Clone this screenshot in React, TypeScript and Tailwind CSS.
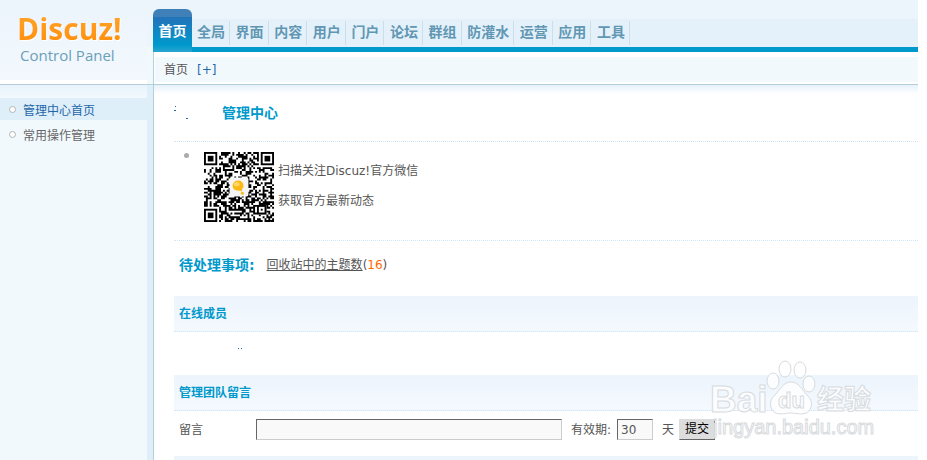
import React from 'react';

const NAV = ['全局', '界面', '内容', '用户', '门户', '论坛', '群组', '防灌水', '运营', '应用', '工具'];
const SIDE_MENU = ['管理中心首页', '常用操作管理'];

const QR_SIZE = 37;

const isFinder = (x: number, y: number) =>
  (x < 8 && y < 8) || (x > QR_SIZE - 9 && y < 8) || (x < 8 && y > QR_SIZE - 9);

const qrPath = (() => {
  let seed = 20117;
  let d = '';
  for (let y = 0; y < QR_SIZE; y++) {
    for (let x = 0; x < QR_SIZE; x++) {
      seed = (seed * 1103515245 + 12345) % 2147483648;
      const timing = (x === 6 || y === 6) && (x + y) % 2 === 0;
      const dark = timing || (seed >> 12) % 100 < 53;
      if (dark && !isFinder(x, y)) d += `M${x} ${y}h1v1h-1z`;
    }
  }
  return d;
})();

const Finder: React.FC<{ x: number; y: number }> = ({ x, y }) => (
  <g>
    <rect x={x + 0.5} y={y + 0.5} width="6" height="6" fill="none" stroke="#000" />
    <rect x={x + 2} y={y + 2} width="3" height="3" />
  </g>
);

const QrCode: React.FC = () => (
  <svg viewBox="0 0 37 37" className="size-[70px] shrink-0" role="img" aria-label="Discuz!">
    <rect width="37" height="37" fill="#fff" />
    <path d={qrPath} />
    <Finder x={0} y={0} />
    <Finder x={30} y={0} />
    <Finder x={0} y={30} />
    <rect x="28" y="28" width="5" height="5" fill="#fff" />
    <rect x="28.5" y="28.5" width="4" height="4" fill="none" stroke="#000" />
    <rect x="30" y="30" width="1" height="1" />
    <rect x="13.5" y="13.5" width="10" height="10" rx="1" fill="#f5f5f5" />
    <ellipse cx="18" cy="17.8" rx="2.9" ry="2.7" fill="#fdb913" />
    <ellipse cx="17.3" cy="17" rx="1.5" ry="1.1" fill="#ffd766" />
    <path d="M17.6 19.9l2.4 1 .2-2z" fill="#fdb913" />
    <circle cx="20.3" cy="21.8" r="0.8" fill="#fdb913" />
  </svg>
);

const Logo: React.FC = () => (
  <div className="px-[17px] pt-[11px] font-['Open_Sans',sans-serif]">
    <div className="bg-linear-to-b from-[#ffa62b] to-[#ff8c00] bg-clip-text text-[30px] font-bold leading-9 text-transparent drop-shadow-[1px_1px_0_#fff]">
      Discuz!
    </div>
    <div className="pl-[3px] text-[15px] leading-4 text-[#6ba0b8]">Control Panel</div>
  </div>
);

const SectionHead: React.FC<{ children: React.ReactNode }> = ({ children }) => (
  <h2 className="h-9 border-b border-dotted border-[#cfe6f8] bg-linear-to-b from-[#ecf4fc] to-[#f4f9fe] px-[5px] text-[12px] font-bold leading-9 text-[#0099cc]">
    {children}
  </h2>
);

const Watermark: React.FC = () => (
  <svg
    viewBox="0 0 170 84"
    className="pointer-events-none absolute left-[555px] bottom-[18px] h-[84px] w-[170px]"
    fill="#fff"
    fillOpacity="0.8"
    stroke="#d8dbde"
    strokeWidth="1"
    aria-hidden="true"
  >
    <text x="1" y="54" fontSize="37" fontWeight="700" fontFamily="Liberation Sans, sans-serif">Bai</text>
    <ellipse cx="64" cy="23" rx="6" ry="8" />
    <ellipse cx="76" cy="11" rx="6" ry="8" />
    <ellipse cx="91" cy="12" rx="6" ry="8" />
    <ellipse cx="100" cy="26" rx="6" ry="8" />
    <path d="M82 24c8 0 11 8 16 13 5 4 6 11 2 16-5 5-11 2-18 2s-13 3-18-2c-4-5-3-12 2-16 5-5 8-13 16-13z" />
    <text x="69" y="50" fontSize="22" fontWeight="700" fontFamily="Liberation Sans, sans-serif">du</text>
    <text x="108" y="51" fontSize="27" fontWeight="700" fontFamily="Noto Sans CJK SC, sans-serif">经验</text>
    <text x="4" y="76" fontSize="20" fontFamily="Liberation Sans, sans-serif">jingyan.baidu.com</text>
  </svg>
);

const App: React.FC = () => {
  return (
    <div className="mr-[9px] flex min-h-screen flex-col font-['DejaVu_Sans','Noto_Sans_CJK_SC',sans-serif] text-[12px] text-[#555]">
      <header className="flex h-[85px] border-b border-[#b5cfd9] bg-white">
        <div className="flex w-[153px] shrink-0">
          <div className="h-20 w-[147px] bg-linear-to-b from-[#ecf4fc] to-[#f2f8fd]">
            <Logo />
          </div>
          <div className="flex flex-1 flex-col">
            <div className="h-[47px] bg-[#edf5fc]" />
            <div className="flex-1 bg-[#f2f9fd]" />
          </div>
        </div>

        <div className="flex min-w-0 flex-1 flex-col">
          <nav className="flex h-[52px] bg-linear-[to_bottom,#edf5fc_19px,#e4f1fa_19px,#e4f1fa_47px,#0099cc_47px] text-[14px] font-bold">
            <a
              href="#home"
              className="mt-[9px] w-[39px] rounded-t-md bg-linear-[to_bottom,#3f80b9_8px,#2373b8_8px,#0099cc_36px,#2aa6d2_43px] text-center leading-[44px] text-white"
            >
              首页
            </a>
            <div className="mt-[19px] flex h-7 w-[438px] justify-between">
              {NAV.map((item) => (
                <a key={item} href="#nav" className="my-[2px] border-r border-[#cbdfe8] pl-[5px] pr-1 leading-[22px] text-[#6197b3]">
                  {item}
                </a>
              ))}
            </div>
          </nav>
          <div className="flex-1 border-l border-[#b5cfd9] pt-[5px] pb-[2px] pl-px">
            <div className="flex h-full items-center gap-[9px] bg-[#f2f9fd] pl-[9px]">
              <span>首页</span>
              <a href="#add" className="text-[#2366a8]">[+]</a>
            </div>
          </div>
        </div>
      </header>

      <div className="flex flex-1">
        <aside className="w-[153px] shrink-0 border-r-[6px] border-[#deeffa] bg-[#f2f9fd]">
          <div className="h-[13px] bg-linear-to-b from-[#e8f3fb] to-[#f2f9fd]" />
          <ul className="flex flex-col gap-[3px]">
            {SIDE_MENU.map((item, i) => (
              <li key={item} className={`flex h-[22px] items-center gap-[7px] pl-[9px] ${i === 0 ? 'bg-[#deeffa] text-[#2366a8]' : 'text-[#666]'}`}>
                <span className="size-[7px] rounded-full border border-[#b4b4b4] bg-white" />
                <a href="#menu" className="pt-[3px]">{item}</a>
              </li>
            ))}
          </ul>
        </aside>

        <main className="relative min-w-0 flex-1 border-l border-[#b5cfd9] bg-linear-[to_bottom,#e6f1fa,#ffffff_9px] pl-5">
          <div className="flex h-[57px] items-center border-b border-dotted border-[#cfe6f8]">
            <svg viewBox="0 0 16 14" className="h-[14px] w-4" aria-hidden="true">
              <path fill="#2366a8" d="M1 0h1v1H1zM0 4h2v1H0zM12 12h2v1h-2z" />
            </svg>
            <h1 className="pl-8 text-[14px] font-bold text-[#0099cc]">管理中心</h1>
          </div>

          <ul className="h-[99px] border-b border-dotted border-[#cfe6f8] pt-[10px] pl-[10px]">
            <li className="flex">
              <span className="mt-px mr-[15px] size-[5px] rounded-full bg-[#aaa]" />
              <QrCode />
              <div className="pt-1 pl-1 leading-[30px]">
                <p>扫描关注Discuz!官方微信</p>
                <p>获取官方最新动态</p>
              </div>
            </li>
          </ul>

          <div className="flex h-[55px] items-center gap-3 px-[5px] pb-[7px]">
            <h3 className="text-[14px] font-bold text-[#0099cc]">待处理事项:</h3>
            <p>
              <a href="#recycle" className="underline">回收站中的主题数</a>(<em className="not-italic text-[#ff6600]">16</em>)
            </p>
          </div>

          <SectionHead>在线成员</SectionHead>
          <div className="flex h-[43px] items-start gap-[2px] pt-4 pl-16">
            <span className="size-px bg-[#2366a8]" />
            <span className="size-px bg-[#2366a8]" />
          </div>

          <SectionHead>管理团队留言</SectionHead>
          <form className="flex h-[45px] items-start pt-2 pl-[5px] leading-[22px]" onSubmit={(e) => e.preventDefault()}>
            <label htmlFor="note" className="w-[77px]">留言</label>
            <input
              id="note"
              type="text"
              className="h-[21px] w-[306px] border border-[#ccc] border-t-[#666] border-l-[#666] bg-[#f9f9f9] px-[3px]"
            />
            <label htmlFor="days" className="mr-[6px] ml-[9px]">有效期:</label>
            <input
              id="days"
              type="text"
              defaultValue="30"
              className="h-[21px] w-9 border border-[#ccc] border-t-[#666] border-l-[#666] bg-[#f9f9f9] px-[3px]"
            />
            <span className="mr-[5px] ml-[9px]">天</span>
            <button
              type="submit"
              className="h-[21px] w-9 border border-[#ddd] border-r-[#666] border-b-[#666] bg-[#ddd] leading-[19px] text-black"
            >
              提交
            </button>
          </form>
          <div className="h-1 bg-[#edf5fc]" />
          <Watermark />
        </main>
      </div>
    </div>
  );
};

export default App;
